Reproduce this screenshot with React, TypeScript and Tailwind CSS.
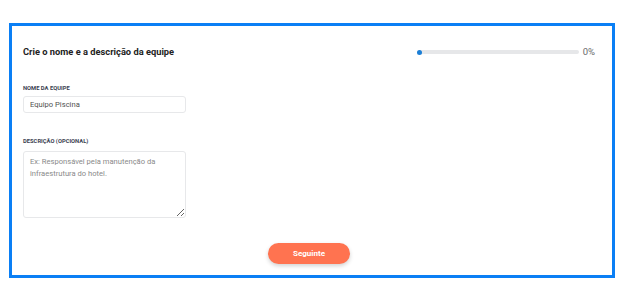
import { useState } from "react";

export default function App() {
  const [name, setName] = useState("Equipo Piscina");
  const [description, setDescription] = useState("");
  const progress = 0;

  return (
    <div className="min-h-[291px] w-[624px] bg-white pl-[9px] pt-[23px] font-['Roboto',sans-serif]">
      <div className="flex h-[255px] w-[606px] flex-col border-[3px] border-[#0a7ff5] bg-white pb-[11px] pl-[11px] pr-[17px] pt-[19px]">
        <div className="flex h-[14px] items-center justify-between">
          <h1 className="text-[9.3px] font-bold leading-[14px] text-[#222]">
            Crie o nome e a descrição da equipe
          </h1>
          <div className="flex items-center gap-[4px]">
            <div className="relative h-[4px] w-[162px] rounded-full bg-[#e6e7e9]">
              <div className="absolute left-0 top-[-0.5px] h-[5px] w-[5px] rounded-full bg-[#1b7fd6]" />
            </div>
            <span className="text-[9.5px] leading-none text-[#6b6b6b]">{progress}%</span>
          </div>
        </div>

        <label
          htmlFor="name"
          className="mt-[25px] block text-[5.8px] font-bold uppercase leading-[8px] text-[#3a4150]"
        >
          Nome da equipe
        </label>
        <input
          id="name"
          type="text"
          value={name}
          onChange={(e) => setName(e.target.value)}
          className="mt-[4px] h-[17px] w-[163px] rounded-[3px] border border-[#e7e8ea] px-[6px] text-[7.6px] text-[#505050] outline-none"
        />

        <label
          htmlFor="description"
          className="mt-[24px] block text-[5.8px] font-bold uppercase leading-[8px] text-[#3a4150]"
        >
          Descrição (opcional)
        </label>
        <textarea
          id="description"
          value={description}
          onChange={(e) => setDescription(e.target.value)}
          placeholder="Ex: Responsável pela manutenção da infraestrutura do hotel."
          className="mt-[6px] h-[67px] w-[163px] resize-y rounded-[3px] border border-[#e7e8ea] px-[6px] py-[4px] text-[7.6px] leading-[12px] text-[#505050] outline-none placeholder:text-[#8a8a8a]"
        />

        <div className="mt-[25px] flex justify-center">
          <button className="h-[21px] w-[82px] rounded-full bg-[#ff7350] text-[8px] font-bold text-white shadow-[0_2px_4px_rgba(0,0,0,0.18)]">
            Seguinte
          </button>
        </div>
      </div>
    </div>
  );
}
